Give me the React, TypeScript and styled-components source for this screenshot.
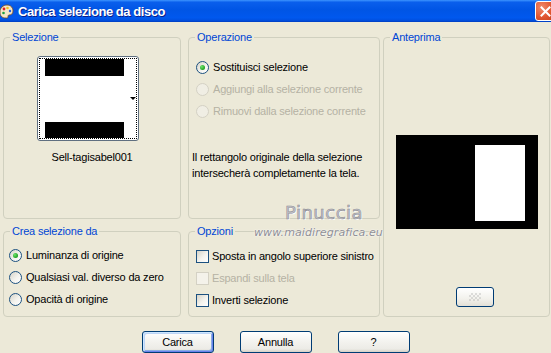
import React from "react";
import styled, { createGlobalStyle } from "styled-components";

const Global = createGlobalStyle`
  html, body { margin: 0; padding: 0; background: #ECE9D8; }
  body { font-family: "Liberation Sans", Arial, sans-serif; }
  * { box-sizing: border-box; }
`;

const Window = styled.div`
  width: 551px;
  height: 353px;
  overflow: hidden;
  background: #ece9d8;
  display: flex;
  flex-direction: column;
  position: relative;
  font-family: "Liberation Sans", Arial, sans-serif;
  font-size: 11px;
  letter-spacing: -0.2px;
  color: #000;
`;

const TitleBar = styled.div`
  height: 22px;
  flex: none;
  display: flex;
  align-items: center;
  background: linear-gradient(
    180deg,
    #3d95ff 0%,
    #0a5fec 10%,
    #0055e5 45%,
    #0058ee 80%,
    #0050e0 92%,
    #003dc0 100%
  );
`;

const TitleIcon = styled.svg`
  width: 16px;
  height: 16px;
  margin-left: -2px;
  flex: none;
`;

const TitleText = styled.span`
  margin-left: 4px;
  color: #fff;
  font-family: "Liberation Sans", Arial, sans-serif;
  font-weight: bold;
  font-size: 13px;
  letter-spacing: -0.45px;
  text-shadow: 1px 1px 0 #0a1e8a;
`;

const CloseButton = styled.div`
  margin-left: auto;
  margin-right: -5px;
  align-self: flex-start;
  margin-top: 1px;
  width: 21px;
  height: 20px;
  flex: none;
  border: 1px solid #fff;
  border-radius: 3px;
  background: radial-gradient(circle at 30% 30%, #f08a6c 0%, #e0552f 55%, #c33e1a 100%);
  display: flex;
  align-items: center;
  justify-content: center;
`;

const Body = styled.div`
  flex: 1;
  display: flex;
  flex-direction: column;
  padding: 9px 0 0 3px;
`;

const Groups = styled.div`
  display: grid;
  grid-template-columns: 185px 195px 167px;
  grid-template-rows: 188px 92px;
  row-gap: 6px;
`;

const Group = styled.fieldset<{ $w: number; $col: number; $row: string }>`
  margin: 0;
  padding: 0;
  min-width: 0;
  width: ${(p) => p.$w}px;
  border: 1px solid #d0d0bf;
  border-radius: 4px;
  grid-column: ${(p) => p.$col};
  grid-row: ${(p) => p.$row};
  display: flex;
  flex-direction: column;
`;

const Legend = styled.legend`
  margin-left: 6px;
  padding: 0 2px;
  color: #0046d5;
  font-size: 11px;
  line-height: 13px;
`;

const Thumb = styled.div`
  margin: 12px 0 0 33px;
  width: 102px;
  height: 85px;
  border: 1px solid #5f6f80;
  border-radius: 3px;
  background: #fff;
  padding: 1px;
`;

const ThumbFocus = styled.div`
  height: 100%;
  border: 1px dotted #000;
  padding: 0 0 0 5px;
  display: flex;
  align-items: center;
`;

const ThumbBars = styled.div`
  width: 79px;
  align-self: stretch;
  display: flex;
  flex-direction: column;
  justify-content: space-between;
`;

const Bar = styled.div<{ $h: number }>`
  height: ${(p) => p.$h}px;
  background: #000;
`;

const DropArrow = styled.div`
  margin-left: auto;
  width: 0;
  height: 0;
  border-left: 3px solid transparent;
  border-right: 3px solid transparent;
  border-top: 3px solid #000;
`;

const ThumbLabel = styled.div`
  margin-top: 10px;
  text-align: center;
  line-height: 13px;
`;

const OptionList = styled.div<{ $top: number; $left: number }>`
  padding: ${(p) => p.$top}px 0 0 ${(p) => p.$left}px;
  display: flex;
  flex-direction: column;
`;

const OptionRow = styled.label<{ $disabled?: boolean; $gap: number }>`
  height: 22px;
  display: flex;
  align-items: center;
  gap: ${(p) => p.$gap}px;
  color: ${(p) => (p.$disabled ? "#b5b2a4" : "#000")};
  white-space: nowrap;
`;

const RadioCircle = styled.span<{ $checked?: boolean; $disabled?: boolean }>`
  width: 13px;
  height: 13px;
  flex: none;
  border-radius: 50%;
  border: 1px solid ${(p) => (p.$disabled ? "#d4d1c4" : "#1c5180")};
  background: ${(p) =>
    p.$disabled ? "#f0eee4" : "linear-gradient(135deg, #d6d3c8 0%, #f4f3ee 55%, #fff 100%)"};
  display: flex;
  align-items: center;
  justify-content: center;
  &::after {
    content: "";
    display: ${(p) => (p.$checked ? "block" : "none")};
    width: 5px;
    height: 5px;
    border-radius: 50%;
    background: radial-gradient(circle at 35% 35%, #6ee46e 0%, #21a121 70%);
  }
`;

const CheckBox = styled.span<{ $disabled?: boolean }>`
  width: 13px;
  height: 13px;
  flex: none;
  border: 1px solid ${(p) => (p.$disabled ? "#d4d1c4" : "#1c5180")};
  background: ${(p) =>
    p.$disabled ? "#f4f2ea" : "linear-gradient(135deg, #d6d3c8 0%, #f4f3ee 55%, #fff 100%)"};
`;

const Note = styled.p`
  margin: 27px 0 0 3px;
  line-height: 16px;
`;

const Preview = styled.div`
  margin: 91px auto 0;
  width: 142px;
  height: 94px;
  background: #000;
  padding: 10px 0 0 79px;
`;

const PreviewSel = styled.div`
  width: 50px;
  height: 76px;
  background: #fff;
`;

const SmallButton = styled.div`
  margin: 58px 0 0 72px;
  width: 38px;
  height: 20px;
  border: 1px solid #003c74;
  border-radius: 3px;
  background: linear-gradient(180deg, #fff 0%, #f2f1ec 60%, #e3e0d6 100%);
  display: flex;
  align-items: center;
  justify-content: center;
`;

const Checker = styled.div`
  width: 12px;
  height: 8px;
  opacity: 0.35;
  background-image: linear-gradient(45deg, #aaa 25%, transparent 25%, transparent 75%, #aaa 75%),
    linear-gradient(45deg, #aaa 25%, transparent 25%, transparent 75%, #aaa 75%);
  background-size: 4px 4px;
  background-position: 0 0, 2px 2px;
`;

const ButtonRow = styled.div`
  margin-top: 14px;
  margin-left: -3px;
  display: flex;
  justify-content: center;
  gap: 26px;
`;

const Button = styled.button<{ $default?: boolean }>`
  width: 72px;
  height: 22px;
  padding: 0;
  font-family: "Liberation Sans", Arial, sans-serif;
  font-size: 11px;
  letter-spacing: -0.2px;
  color: #000;
  border: 1px solid #003c74;
  border-radius: 3px;
  background: linear-gradient(180deg, #fff 0%, #f3f2ee 50%, #ecebe6 85%, #d6d0c5 100%);
  box-shadow: ${(p) =>
    p.$default
      ? "inset 1px 1px 0 #cee7ff, inset -1px -1px 0 #6982ee, inset 2px 2px 0 #bcd4f6, inset -2px -2px 0 #89ade4"
      : "none"};
`;

const Watermark = styled.div`
  position: absolute;
  left: 254px;
  top: 203px;
  width: 130px;
  display: flex;
  flex-direction: column;
  align-items: flex-start;
  pointer-events: none;
`;

const WatermarkName = styled.span`
  margin-left: 31px;
  font-family: "DejaVu Sans", sans-serif;
  font-size: 18px;
  line-height: 20px;
  letter-spacing: 0.5px;
  color: #c4c4ca;
  -webkit-text-stroke: 0.6px #8e8e96;
  text-shadow: 1px 1px 0 #fff;
`;

const WatermarkUrl = styled.span`
  margin-top: 3px;
  font-family: "DejaVu Sans", sans-serif;
  font-style: italic;
  font-size: 11px;
  line-height: 13px;
  letter-spacing: 0.1px;
  color: #8e8e94;
  text-shadow: 0 0 2px #fff, 0 0 1px #fff;
`;

type Opt = { label: string; checked?: boolean; disabled?: boolean };

const Radios = ({ items, top, left }: { items: Opt[]; top: number; left: number }) => (
  <OptionList $top={top} $left={left}>
    {items.map((o) => (
      <OptionRow key={o.label} $disabled={o.disabled} $gap={4}>
        <RadioCircle $checked={o.checked} $disabled={o.disabled} />
        {o.label}
      </OptionRow>
    ))}
  </OptionList>
);

const Checks = ({ items, top, left }: { items: Opt[]; top: number; left: number }) => (
  <OptionList $top={top} $left={left}>
    {items.map((o) => (
      <OptionRow key={o.label} $disabled={o.disabled} $gap={3}>
        <CheckBox $disabled={o.disabled} />
        {o.label}
      </OptionRow>
    ))}
  </OptionList>
);

export default function App() {
  return (
    <>
      <Global />
      <Window>
        <TitleBar>
          <TitleIcon viewBox="0 0 16 16">
            <path d="M2 9c0-4 3-7 7-7s6 3 6 6c0 3-2 4-4 4-1 0-1 1-1 2s-1 1-2 1C4 15 2 13 2 9z" fill="#f3e6c8" stroke="#7a4a1a" strokeWidth="0.8" />
            <circle cx="6" cy="6" r="1.4" fill="#e02020" />
            <circle cx="9.5" cy="5" r="1.3" fill="#f0c020" />
            <circle cx="12" cy="8" r="1.2" fill="#2060e0" />
            <circle cx="5.5" cy="10" r="1.3" fill="#20a040" />
          </TitleIcon>
          <TitleText>Carica selezione da disco</TitleText>
          <CloseButton>
            <svg width="11" height="11" viewBox="0 0 11 11">
              <path d="M1.5 1.5l8 8M9.5 1.5l-8 8" stroke="#fff" strokeWidth="2" strokeLinecap="square" />
            </svg>
          </CloseButton>
        </TitleBar>
        <Body>
          <Groups>
            <Group $w={178} $col={1} $row="1">
              <Legend>Selezione</Legend>
              <Thumb>
                <ThumbFocus>
                  <ThumbBars>
                    <Bar $h={17} />
                    <Bar $h={16} />
                  </ThumbBars>
                  <DropArrow />
                </ThumbFocus>
              </Thumb>
              <ThumbLabel>Sell-tagisabel001</ThumbLabel>
            </Group>
            <Group $w={192} $col={2} $row="1">
              <Legend>Operazione</Legend>
              <Radios
                top={12}
                left={7}
                items={[
                  { label: "Sostituisci selezione", checked: true },
                  { label: "Aggiungi alla selezione corrente", disabled: true },
                  { label: "Rimuovi dalla selezione corrente", disabled: true },
                ]}
              />
              <Note>
                Il rettangolo originale della selezione
                <br />
                intersecherà completamente la tela.
              </Note>
            </Group>
            <Group $w={167} $col={3} $row="1 / span 2">
              <Legend>Anteprima</Legend>
              <Preview>
                <PreviewSel />
              </Preview>
              <SmallButton>
                <Checker />
              </SmallButton>
            </Group>
            <Group $w={178} $col={1} $row="2">
              <Legend>Crea selezione da</Legend>
              <Radios
                top={6}
                left={5}
                items={[
                  { label: "Luminanza di origine", checked: true },
                  { label: "Qualsiasi val. diverso da zero" },
                  { label: "Opacità di origine" },
                ]}
              />
            </Group>
            <Group $w={192} $col={2} $row="2">
              <Legend>Opzioni</Legend>
              <Checks
                top={7}
                left={7}
                items={[
                  { label: "Sposta in angolo superiore sinistro" },
                  { label: "Espandi sulla tela", disabled: true },
                  { label: "Inverti selezione" },
                ]}
              />
            </Group>
          </Groups>
          <ButtonRow>
            <Button $default>Carica</Button>
            <Button>Annulla</Button>
            <Button>?</Button>
          </ButtonRow>
        </Body>
        <Watermark>
          <WatermarkName>Pinuccia</WatermarkName>
          <WatermarkUrl>www.maidiregrafica.eu</WatermarkUrl>
        </Watermark>
      </Window>
    </>
  );
}
